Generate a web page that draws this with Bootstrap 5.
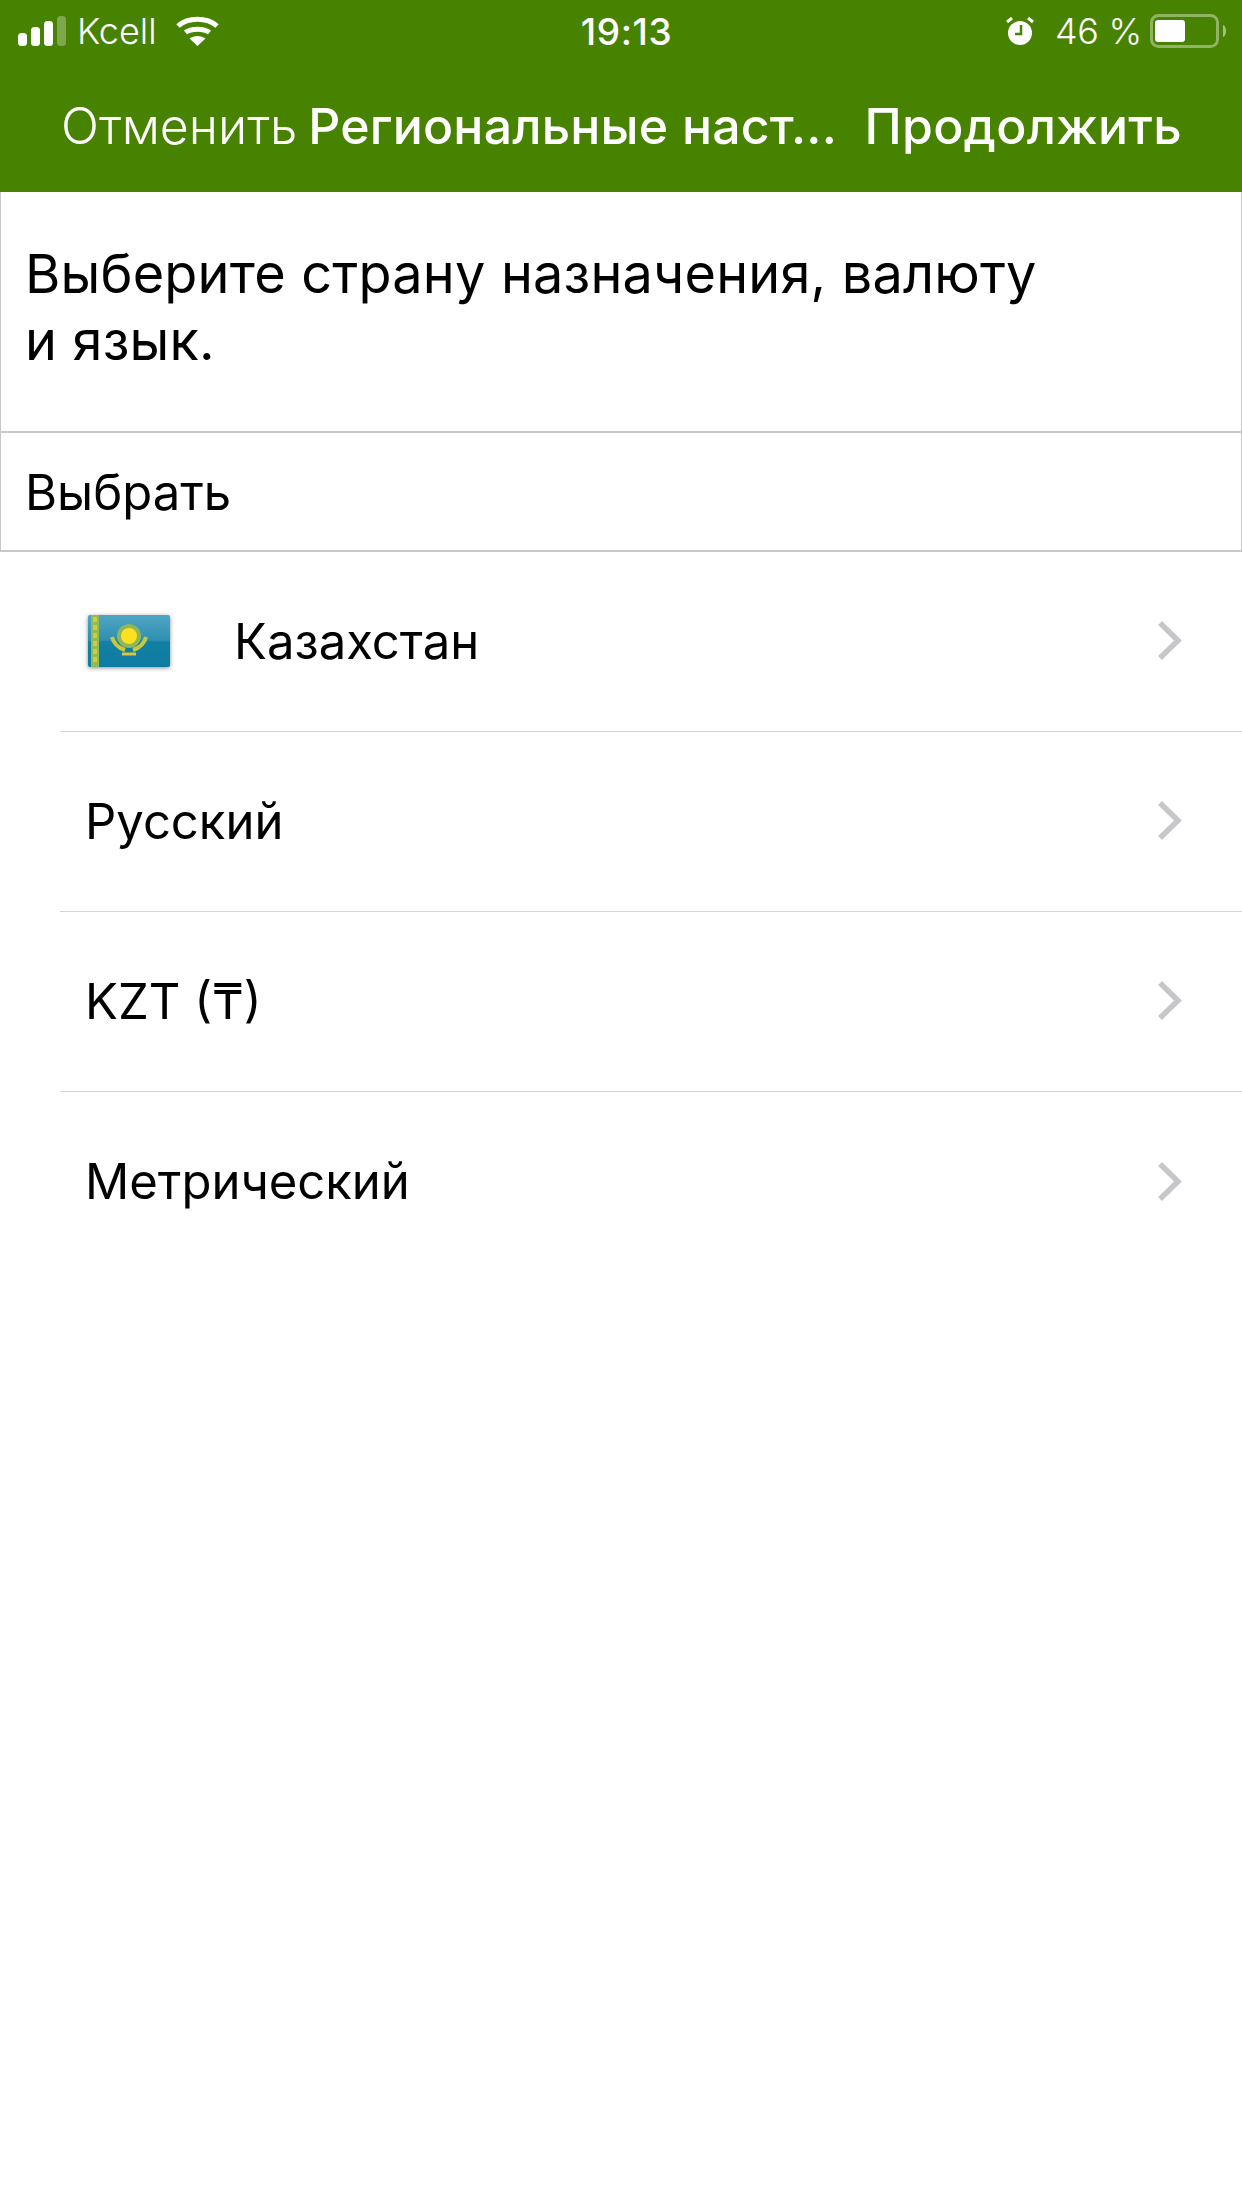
<!DOCTYPE html>
<html lang="ru">
<head>
<meta charset="UTF-8">
<meta name="viewport" content="width=device-width, initial-scale=1.0">
<title>Региональные настройки</title>
<link href="https://cdn.jsdelivr.net/npm/bootstrap@5.3.3/dist/css/bootstrap.min.css" rel="stylesheet">
<style>
body { font-family: Inter, "Liberation Sans", sans-serif; background: #fff; color: #000; }
.app-head { background: #478300; color: #fff; height: 192px; }
.status-bar { height: 62px; padding: 0 15px 0 18px; font-size: 36px; font-weight: 300; line-height: 1; }
.status-side { width: 400px; }
.status-carrier { margin-left: 11px; }
.status-wifi { margin-left: 19px; }
.status-pct { margin-left: 21px; letter-spacing: -.3px; }
.status-batt { margin-left: 8px; }
.status-time { font-weight: 500; font-size: 37px; letter-spacing: .6px; margin-left: 8px; }
.title-bar { height: 130px; padding: 0 60px 2px 61px; font-size: 50px; }
.title-cancel { font-weight: 300; }
.title-main { font-weight: 500; letter-spacing: .2px; margin-left: 11px; }
.title-next { font-weight: 500; margin-left: auto; letter-spacing: .3px; }
.intro-box { height: 241px; padding: 48px 24px 0; border: 2px solid #c8c8cc; border-width: 0 1px 2px; font-size: 54px; line-height: 67px; letter-spacing: .2px; }
.pick-box { height: 119px; padding: 2px 24px 0; border: 2px solid #c8c8cc; border-width: 0 1px 2px; font-size: 49px; }
.region-row { height: 180px; margin-left: 60px; padding: 0 60px 0 25px; border: 0; border-bottom: 2px solid #d4d4d6; border-radius: 0; font-size: 49px; color: #000; }
.flag-slot { width: 149px; padding-left: 3px; margin-top: -2px; }
.flag-img { filter: drop-shadow(0 1px 2px rgba(0, 0, 0, .45)); }
.chev { margin-left: auto; margin-top: -2px; }
</style>
</head>
<body>
<div class="app-head">
    <div class="status-bar d-flex align-items-center justify-content-between">
        <div class="status-side d-flex align-items-center">
            <svg width="48" height="30" viewBox="0 0 48 30">
                <rect x="0" y="17" width="9" height="13" rx="3.5" fill="#fff"/>
                <rect x="13" y="11" width="9" height="19" rx="3.5" fill="#fff"/>
                <rect x="26" y="5" width="9" height="25" rx="3.5" fill="#fff"/>
                <rect x="39" y="0" width="9" height="30" rx="3.5" fill="#fff" opacity=".3"/>
            </svg>
            <span class="status-carrier">Kcell</span>
            <svg class="status-wifi" width="43" height="30" viewBox="0 0 43 30" fill="none" stroke="#fff" stroke-width="5">
                <path d="M2 10C12 1 31 1 41 10"/>
                <path d="M9.5 16.5C15 12 28 12 33.5 16.5"/>
                <path d="M21.5 30L13.5 22.5C18 19 25 19 29.5 22.5Z" fill="#fff" stroke="none"/>
            </svg>
        </div>
        <div class="status-time">19:13</div>
        <div class="status-side d-flex align-items-center justify-content-end">
            <svg width="28" height="28" viewBox="0 0 28 28">
                <circle cx="14" cy="16" r="12" fill="#fff"/>
                <path d="M15 8V17H9" fill="none" stroke="#478300" stroke-width="2.5"/>
                <path d="M1 5L6 1M27 5L22 1" stroke="#fff" stroke-width="3"/>
            </svg>
            <span class="status-pct">46 %</span>
            <svg class="status-batt" width="77" height="34" viewBox="0 0 77 34">
                <rect x="1.5" y="1.5" width="66" height="31" rx="7" fill="none" stroke="#fff" stroke-opacity=".4" stroke-width="3"/>
                <rect x="5" y="6" width="30" height="22" rx="3" fill="#fff"/>
                <path d="M73 11C77 12 77 22 73 23Z" fill="#fff" fill-opacity=".5"/>
            </svg>
        </div>
    </div>
    <div class="title-bar d-flex align-items-center">
        <span class="title-cancel">Отменить</span>
        <span class="title-main">Региональные наст...</span>
        <span class="title-next">Продолжить</span>
    </div>
</div>

<div class="intro-box">Выберите страну назначения, валюту<br>и язык.</div>
<div class="pick-box d-flex align-items-center">Выбрать</div>

<div class="list-group list-group-flush">
    <a class="list-group-item region-row d-flex align-items-center">
        <span class="flag-slot">
            <svg class="flag-img d-block" width="82" height="52" viewBox="0 0 82 52">
                <defs>
                    <linearGradient id="kzGrad" x1="0" y1="0" x2="0" y2="1">
                        <stop offset="0" stop-color="#4fa6c4"/>
                        <stop offset=".48" stop-color="#2f8fb2"/>
                        <stop offset=".52" stop-color="#127fa5"/>
                        <stop offset="1" stop-color="#0f7ba0"/>
                    </linearGradient>
                </defs>
                <rect width="82" height="52" rx="2" fill="url(#kzGrad)"/>
                <rect x="3" y="0" width="8" height="52" fill="#8fbb55"/>
                <path d="M7 2V50" stroke="#d9c93a" stroke-width="4" stroke-dasharray="5 3"/>
                <circle cx="41" cy="21" r="12" fill="#8fb75a"/>
                <circle cx="41" cy="21" r="8" fill="#ffdf1e"/>
                <path d="M24 22C26 30 31 33 37 35M58 22C56 30 51 33 45 35" fill="none" stroke="#c8c83a" stroke-width="4"/>
                <path d="M34 39H48" stroke="#d9c93a" stroke-width="3"/>
            </svg>
        </span>
        <span>Казахстан</span>
        <svg class="chev" width="24" height="39" viewBox="0 0 24 39" fill="none" stroke="#c6c6cb" stroke-width="5.5"><path d="M2 2L20 19.5L2 37"/></svg>
    </a>
    <a class="list-group-item region-row d-flex align-items-center">
        <span>Русский</span>
        <svg class="chev" width="24" height="39" viewBox="0 0 24 39" fill="none" stroke="#c6c6cb" stroke-width="5.5"><path d="M2 2L20 19.5L2 37"/></svg>
    </a>
    <a class="list-group-item region-row d-flex align-items-center">
        <span>KZT (₸)</span>
        <svg class="chev" width="24" height="39" viewBox="0 0 24 39" fill="none" stroke="#c6c6cb" stroke-width="5.5"><path d="M2 2L20 19.5L2 37"/></svg>
    </a>
    <a class="list-group-item region-row d-flex align-items-center">
        <span>Метрический</span>
        <svg class="chev" width="24" height="39" viewBox="0 0 24 39" fill="none" stroke="#c6c6cb" stroke-width="5.5"><path d="M2 2L20 19.5L2 37"/></svg>
    </a>
</div>
<script src="https://cdn.jsdelivr.net/npm/bootstrap@5.3.3/dist/js/bootstrap.bundle.min.js"></script>
</body>
</html>
